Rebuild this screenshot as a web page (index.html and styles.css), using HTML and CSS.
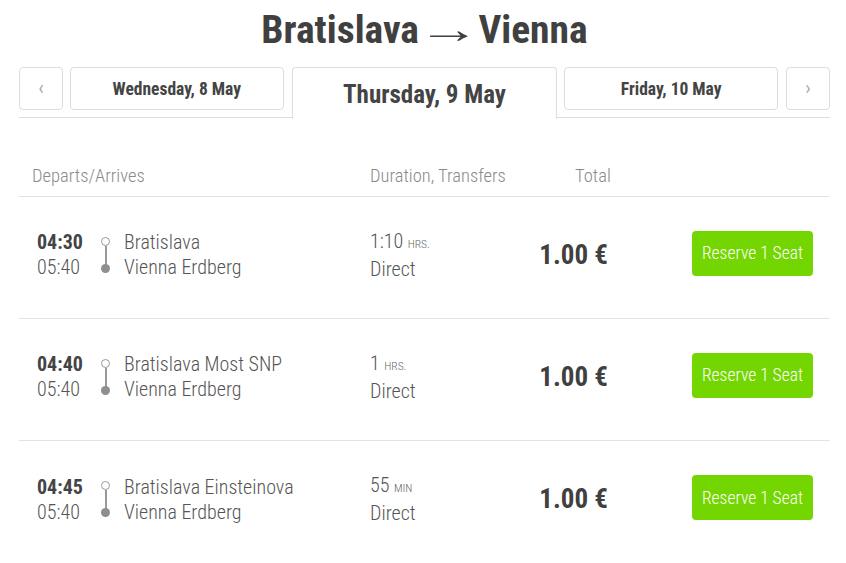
FILE: index.html
```html
<!DOCTYPE html>
<html>
<head>
<meta charset="utf-8">
<link rel="stylesheet" href="styles.css">
</head>
<body>
<div class="page">
  <h1 class="title">Bratislava<span class="arrow">→</span>Vienna</h1>
  <div class="tabs">
    <div class="tab nav">‹</div>
    <div class="tab day">Wednesday, 8 May</div>
    <div class="tab active">Thursday, 9 May</div>
    <div class="tab day">Friday, 10 May</div>
    <div class="tab nav">›</div>
  </div>
  <div class="head">
    <div class="h-dep">Departs/Arrives</div>
    <div class="h-dur">Duration, Transfers</div>
    <div class="h-tot">Total</div>
  </div>

  <div class="row">
    <div class="times"><b>04:30</b><span>05:40</span></div>
    <div class="route"><i class="o"></i><i class="l"></i><i class="d"></i></div>
    <div class="stations"><span>Bratislava</span><span>Vienna Erdberg</span></div>
    <div class="dur"><span>1:10 <small>HRS.</small></span><span>Direct</span></div>
    <div class="price">1.00 €</div>
    <button class="btn">Reserve 1 Seat</button>
  </div>

  <div class="row">
    <div class="times"><b>04:40</b><span>05:40</span></div>
    <div class="route"><i class="o"></i><i class="l"></i><i class="d"></i></div>
    <div class="stations"><span>Bratislava Most SNP</span><span>Vienna Erdberg</span></div>
    <div class="dur"><span>1 <small>HRS.</small></span><span>Direct</span></div>
    <div class="price">1.00 €</div>
    <button class="btn">Reserve 1 Seat</button>
  </div>

  <div class="row last">
    <div class="times"><b>04:45</b><span>05:40</span></div>
    <div class="route"><i class="o"></i><i class="l"></i><i class="d"></i></div>
    <div class="stations"><span>Bratislava Einsteinova</span><span>Vienna Erdberg</span></div>
    <div class="dur"><span>55 <small>MIN</small></span><span>Direct</span></div>
    <div class="price">1.00 €</div>
    <button class="btn">Reserve 1 Seat</button>
  </div>
</div>
</body>
</html>
```

FILE: styles.css
```css
* { box-sizing: border-box; }
body {
  margin: 0;
  background: #fff;
  font-family: "Roboto Condensed", Roboto, "Liberation Sans", sans-serif;
  font-stretch: 75%;
  color: #444;
}
.page {
  width: 811px;
  margin-left: 19px;
}
.title {
  margin: 0;
  height: 67px;
  padding-top: 4px;
  font-size: 39.5px;
  line-height: 52px;
  font-weight: 700;
  text-align: center;
  color: #404040;
}
.arrow {
  font-weight: 300;
  font-stretch: 100%;
  display: inline-block;
  transform: scaleX(1.6);
  margin: 0 10px;
}
.tabs {
  display: flex;
  align-items: flex-start;
  height: 51px;
  border-bottom: 1px solid #ddd;
}
.tab {
  height: 43px;
  border: 1px solid #ddd;
  border-radius: 4px;
  display: flex;
  align-items: center;
  justify-content: center;
  font-weight: 700;
  font-size: 17.5px;
  color: #444;
}
.nav {
  width: 44px;
  color: #aaa;
  font-weight: 400;
  font-size: 20px;
  padding-bottom: 2px;
}
.day { width: 214px; }
.tab + .tab { margin-left: 7px; }
.tab.active {
  width: 266px;
  height: 52px;
  margin-left: 8px;
  border-bottom: 1px solid #fff;
  border-radius: 4px 4px 0 0;
  font-size: 25px;
  background: #fff;
  padding-top: 2px;
}
.tab.active + .tab { margin-left: 7px; }
.tab.day:nth-child(4) + .nav { margin-left: 8px; }

.head {
  display: flex;
  height: 79px;
  align-items: flex-end;
  padding: 0 0 8px 13px;
  border-bottom: 1px solid #e3e3e3;
  font-weight: 300;
  font-size: 18.5px;
  line-height: 24px;
  color: #8a8a8a;
}
.h-dep { width: 338px; }
.h-dur { width: 205px; }

.row {
  display: flex;
  align-items: center;
  height: 122px;
  padding: 0 17px 5px 18px;
  border-bottom: 1px solid #e3e3e3;
  font-size: 20px;
  line-height: 25px;
}
.row.last { border-bottom: none; }
.times {
  width: 64px;
  display: flex;
  flex-direction: column;
  color: #444;
}
.times b { font-weight: 700; }
.times span { font-weight: 300; color: #555; }
.route {
  width: 23px;
  height: 37px;
  display: flex;
  flex-direction: column;
  align-items: flex-start;
}
.route i { display: block; }
.route .o {
  width: 9px;
  height: 9px;
  border: 1.5px solid #999;
  border-radius: 50%;
}
.route .l {
  width: 2px;
  height: 19px;
  margin-left: 3.5px;
  background: #999;
}
.route .d {
  width: 9px;
  height: 9px;
  border-radius: 50%;
  background: #8f8f8f;
  margin-top: -1px;
}
.stations {
  width: 246px;
  display: flex;
  flex-direction: column;
  font-weight: 300;
  color: #555;
}
.dur {
  width: 150px;
  display: flex;
  flex-direction: column;
  font-weight: 300;
  color: #555;
}
.dur small {
  font-size: 11.5px;
  color: #666;
}
.price {
  width: 90px;
  text-align: right;
  font-weight: 700;
  font-size: 27px;
  color: #404040;
  padding-right: 2px;
}
.btn {
  margin-left: auto;
  margin-bottom: 4px;
  width: 121px;
  height: 45px;
  border: none;
  border-radius: 4px;
  background: #74d600;
  color: #fff;
  font-family: inherit;
  font-stretch: 75%;
  font-weight: 300;
  font-size: 17.5px;
  padding: 0;
}
```
